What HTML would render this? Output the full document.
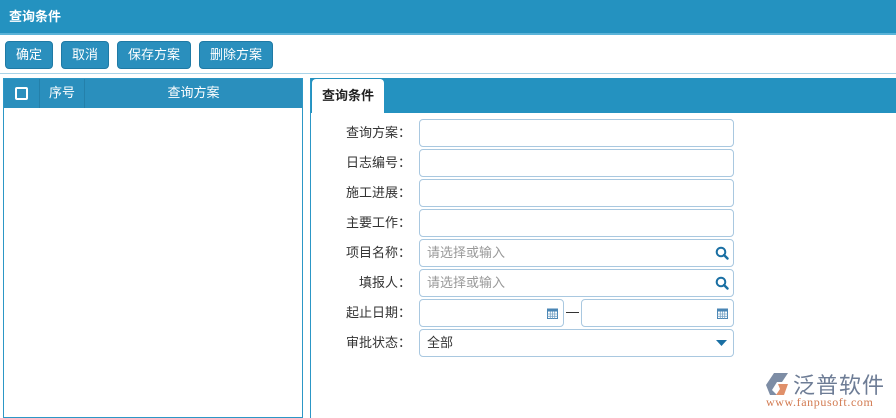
<!DOCTYPE html>
<html><head><meta charset="utf-8"><style>
*{margin:0;padding:0;box-sizing:border-box}
body{width:896px;height:418px;overflow:hidden;background:#fff;font-family:"Liberation Sans","Noto Sans CJK SC",sans-serif;font-size:13px;color:#333;position:relative}
.hd{position:absolute;left:0;top:0;width:896px;height:35px;background:#2492c0;border-bottom:2px solid #5bb3d8;color:#fff;font-weight:bold;font-size:13px;line-height:33px;padding-left:9px}
.btn{position:absolute;top:41px;height:28px;background:#2a8fbd;border:1px solid #1f7aa5;border-radius:4px;color:#fff;font-size:13px;line-height:26px;text-align:center}
.sep{position:absolute;left:0;top:73px;width:896px;height:1px;background:#a9d3e8}
.lp{position:absolute;left:3px;top:78px;width:300px;height:340px;border:1px solid #2c97c6}
.lh{position:absolute;left:0;top:0;width:298px;height:29px;background:#2a8fbd;color:#fff;font-size:13px}
.lh div{position:absolute;top:0;height:29px;line-height:28px;text-align:center;border-right:1px solid #2480aa}
.rp{position:absolute;left:310px;top:78px;width:586px;height:340px;border-left:1px solid #2c97c6}
.tabs{position:absolute;left:0;top:0;width:586px;height:35px;background:#2492c0}
.tab{position:absolute;left:1px;top:1px;width:72px;height:34px;background:#fff;border-radius:4px 4px 0 0;font-weight:bold;color:#222;line-height:34px;text-align:center}
.lb{position:absolute;left:310px;width:101px;text-align:right;font-size:13px;color:#333;height:27px;line-height:27px}
.in{position:absolute;left:419px;width:315px;height:28px;border:1px solid #a9c8e0;border-radius:4px;background:#fff;color:#999;line-height:26px;padding-left:7px;font-size:13px}
</style></head><body>
<div class="hd">查询条件</div>
<div class="btn" style="left:5px;width:48px">确定</div>
<div class="btn" style="left:61px;width:48px">取消</div>
<div class="btn" style="left:117px;width:74px">保存方案</div>
<div class="btn" style="left:199px;width:74px">删除方案</div>
<div class="sep"></div>
<div class="lp"><div class="lh">
<div style="left:0;width:36px"><span style="display:inline-block;width:13px;height:13px;border:2px solid #fff;border-radius:2px;margin-top:8px"></span></div>
<div style="left:36px;width:45px">序号</div>
<div style="left:81px;width:217px;border:none">查询方案</div>
</div></div>
<div class="rp"><div class="tabs"><div class="tab">查询条件</div></div></div>
<div class="lb" style="top:119px">查询方案：</div><div class="in" style="top:119px"></div>
<div class="lb" style="top:149px">日志编号：</div><div class="in" style="top:149px"></div>
<div class="lb" style="top:179px">施工进展：</div><div class="in" style="top:179px"></div>
<div class="lb" style="top:209px">主要工作：</div><div class="in" style="top:209px"></div>
<div class="lb" style="top:239px">项目名称：</div><div class="in" style="top:239px">请选择或输入<svg style="position:absolute;right:4px;top:6px" width="14" height="14" viewBox="0 0 14 14"><circle cx="6" cy="6" r="4.3" fill="none" stroke="#1a6fa3" stroke-width="2"/><path d="M9 9l3.5 3.5" stroke="#1a6fa3" stroke-width="2.4" stroke-linecap="round"/></svg></div>
<div class="lb" style="top:269px">填报人：</div><div class="in" style="top:269px">请选择或输入<svg style="position:absolute;right:4px;top:6px" width="14" height="14" viewBox="0 0 14 14"><circle cx="6" cy="6" r="4.3" fill="none" stroke="#1a6fa3" stroke-width="2"/><path d="M9 9l3.5 3.5" stroke="#1a6fa3" stroke-width="2.4" stroke-linecap="round"/></svg></div>
<div class="lb" style="top:299px">起止日期：</div>
<div class="in" style="top:299px;width:145px"><svg style="position:absolute;right:5px;top:7px" width="11" height="12" viewBox="0 0 11 12"><rect x="0.5" y="2" width="10" height="9.5" fill="#fff" stroke="#4a86b5"/><rect x="0.5" y="2" width="10" height="2.5" fill="#4a86b5"/><path d="M0.5 7h10M0.5 9.3h10M3.3 4.5v7M5.5 4.5v7M7.7 4.5v7" stroke="#7aa6c8" stroke-width=".8"/></svg></div>
<div style="position:absolute;left:566px;top:312px;width:13px;height:1px;background:#333"></div>
<div class="in" style="top:299px;left:581px;width:153px"><svg style="position:absolute;right:5px;top:7px" width="11" height="12" viewBox="0 0 11 12"><rect x="0.5" y="2" width="10" height="9.5" fill="#fff" stroke="#4a86b5"/><rect x="0.5" y="2" width="10" height="2.5" fill="#4a86b5"/><path d="M0.5 7h10M0.5 9.3h10M3.3 4.5v7M5.5 4.5v7M7.7 4.5v7" stroke="#7aa6c8" stroke-width=".8"/></svg></div>
<div class="lb" style="top:329px">审批状态：</div><div class="in" style="top:329px;color:#333">全部<svg style="position:absolute;right:6px;top:10px" width="11" height="7" viewBox="0 0 11 7"><path d="M0 0h11L5.5 6z" fill="#1a6fa3"/></svg></div>
<div style="position:absolute;left:766px;top:372px">
<svg width="26" height="24" viewBox="0 0 26 24" style="position:absolute;left:0;top:0"><path d="M8 1h14l-6 9H11l-5 8 5 5H4L0 13z" fill="#7d8da5"/><path d="M12 12h10l-4 11h-8l4-6z" fill="#e0906a"/></svg>
<div style="position:absolute;left:27px;top:-4px;font-size:22px;color:#6d7c95;white-space:nowrap;letter-spacing:1px;font-family:'Noto Sans CJK SC',sans-serif">泛普软件</div>
<div style="position:absolute;left:0px;top:23px;font-size:12px;color:#d27a50;white-space:nowrap;letter-spacing:0.6px;font-family:'Liberation Serif',serif">www.fanpusoft.com</div>
</div>
</body></html>
